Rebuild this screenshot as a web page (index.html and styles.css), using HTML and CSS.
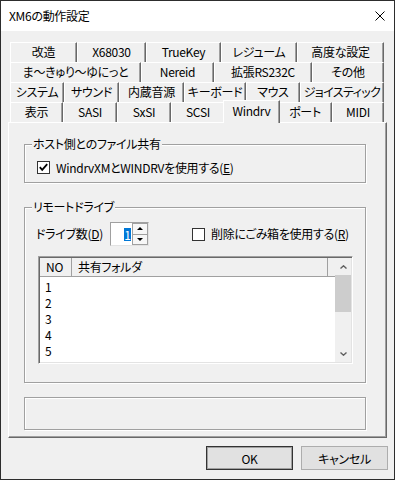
FILE: index.html
```html
<!DOCTYPE html>
<html lang="ja">
<head>
  <meta charset="UTF-8" />
  <title>XM6の動作設定</title>
  <link rel="stylesheet" href="styles.css">
</head>
<body>
  <div class="window">
    <div class="titlebar">
      <span class="title">XM6の動作設定</span>
      <svg class="close" width="10" height="10" viewBox="0 0 10 10">
        <path d="M0.5 0.5 L9.5 9.5 M9.5 0.5 L0.5 9.5" stroke="#000" stroke-width="1" fill="none"/>
      </svg>
    </div>

    <div class="client">
      <!-- tab rows, top to bottom -->
      <div class="tabs">
        <div class="tab-row row1">
          <div class="tab">改造</div>
          <div class="tab">X68030</div>
          <div class="tab">TrueKey</div>
          <div class="tab">レジューム</div>
          <div class="tab">高度な設定</div>
        </div>
        <div class="tab-row row2">
          <div class="tab">ま～きゅり～ゆにっと</div>
          <div class="tab">Nereid</div>
          <div class="tab">拡張RS232C</div>
          <div class="tab">その他</div>
        </div>
        <div class="tab-row row3">
          <div class="tab">システム</div>
          <div class="tab">サウンド</div>
          <div class="tab">内蔵音源</div>
          <div class="tab">キーボード</div>
          <div class="tab">マウス</div>
          <div class="tab">ジョイスティック</div>
        </div>
        <div class="tab-row row4">
          <div class="tab">表示</div>
          <div class="tab">SASI</div>
          <div class="tab">SxSI</div>
          <div class="tab">SCSI</div>
          <div class="tab selected">Windrv</div>
          <div class="tab">ポート</div>
          <div class="tab">MIDI</div>
        </div>
      </div>

      <div class="panel">
        <div class="group group-host">
          <div class="group-label">ホスト側とのファイル共有</div>
          <label class="check">
            <span class="box">
              <svg width="11" height="11" viewBox="0 0 11 11">
                <path d="M1.8 5.2 L4.2 7.8 L9.2 2.2" stroke="#000" stroke-width="1.8" fill="none"/>
              </svg>
            </span>
            <span>WindrvXMとWINDRVを使用する(<u>E</u>)</span>
          </label>
        </div>

        <div class="group group-remote">
          <div class="group-label">リモートドライブ</div>
          <div class="drive-row">
            <span class="drive-label">ドライブ数(<u>D</u>)</span>
            <div class="spin">
              <div class="spin-edit"><span class="sel">1</span></div>
              <div class="spin-buttons">
                <div class="spin-btn"><span class="arrow-up"></span></div>
                <div class="spin-btn"><span class="arrow-down"></span></div>
              </div>
            </div>
            <label class="check check-trash">
              <span class="box"></span>
              <span>削除にごみ箱を使用する(<u>R</u>)</span>
            </label>
          </div>

          <div class="list">
            <div class="list-main">
              <div class="list-header">
                <div class="col col-no">NO</div>
                <div class="col col-folder">共有フォルダ</div>
              </div>
              <div class="list-body">
                <div class="item">1</div>
                <div class="item">2</div>
                <div class="item">3</div>
                <div class="item">4</div>
                <div class="item">5</div>
              </div>
            </div>
            <div class="scrollbar">
              <div class="sb-btn">
                <svg width="7" height="4" viewBox="0 0 7 4"><path d="M0.5 3.5 L3.5 0.8 L6.5 3.5" stroke="#606060" stroke-width="1.4" fill="none"/></svg>
              </div>
              <div class="sb-thumb"></div>
              <div class="sb-track"></div>
              <div class="sb-btn">
                <svg width="7" height="4" viewBox="0 0 7 4"><path d="M0.5 0.5 L3.5 3.2 L6.5 0.5" stroke="#606060" stroke-width="1.4" fill="none"/></svg>
              </div>
            </div>
          </div>
        </div>

        <div class="group group-empty"></div>
      </div>

      <div class="buttons">
        <button class="btn btn-default">OK</button>
        <button class="btn">キャンセル</button>
      </div>
    </div>
  </div>
</body>
</html>
```

FILE: styles.css
```css
* {
  box-sizing: border-box;
}

body {
  margin: 0;
  font-family: "Noto Sans CJK JP", "Noto Sans", sans-serif;
  font-size: 12px;
  font-feature-settings: "palt";
  letter-spacing: -0.3px;
  color: #000;
  background: #f0f0f0;
}

.window {
  width: 395px;
  height: 480px;
  border: 1px solid #2d2d2d;
  background: #f0f0f0;
  overflow: hidden;
}

.titlebar {
  height: 30px;
  background: #fff;
  display: flex;
  align-items: center;
  justify-content: space-between;
  padding: 0 9px 0 8px;
}

.title {
  line-height: 30px;
}

.close {
  display: block;
}

/* tabs */
.tabs {
  margin: 11px 0 0 9px;
}

.tab-row {
  display: grid;
  height: 20px;
}

.row1 { grid-template-columns: 67px 69px 75px 76px 87px; }
.row2 { grid-template-columns: 131px 73px 98px 72px; }
.row3 { grid-template-columns: 54px 55px 65px 62px 54px 84px; }
.row4 { grid-template-columns: 53px 54px 54px 54px 53px 54px 52px; }

.tab {
  height: 20px;
  border-top: 1px solid #fff;
  border-left: 1px solid #fff;
  border-right: 1px solid #696969;
  box-shadow: inset -1px 0 #a0a0a0;
  display: flex;
  justify-content: center;
  line-height: 18px;
  white-space: nowrap;
}

.row3 .tab:last-child {
  letter-spacing: -0.6px;
}

.tab.selected {
  margin: -2px -2px 0;
  height: 23px;
  position: relative;
  z-index: 1;
  background: #f0f0f0;
  line-height: 19px;
}

/* tab page */
.panel {
  margin-left: 7px;
  width: 379px;
  height: 316px;
  border: 1px solid;
  border-color: #fff #696969 #696969 #fff;
  box-shadow: inset -1px -1px #a0a0a0;
  padding-left: 15px;
}

.group {
  width: 342px;
  border: 1px solid #a0a0a0;
  box-shadow: 1px 1px #fff, inset 1px 1px #fff;
}

.group-label {
  width: max-content;
  margin: -9px 0 0 7px;
  padding: 0 1px;
  line-height: 16px;
  background: #f0f0f0;
}

.group-host {
  margin-top: 21px;
  height: 39px;
}

.group-remote {
  margin-top: 24px;
  height: 176px;
}

.group-empty {
  margin-top: 14px;
  height: 33px;
}

.check {
  display: flex;
  align-items: center;
  gap: 6px;
  height: 13px;
  line-height: 16px;
  white-space: nowrap;
}

.group-host .check {
  margin: 9px 0 0 12px;
}

.box {
  width: 13px;
  height: 13px;
  border: 1px solid #333;
  background: #fff;
  display: flex;
  align-items: center;
  justify-content: center;
  flex: none;
}

.drive-row {
  display: flex;
  align-items: center;
  height: 24px;
  margin-top: 7px;
  padding-left: 11px;
}

.drive-label {
  width: 74px;
  line-height: 16px;
  white-space: nowrap;
}

.spin {
  width: 39px;
  height: 24px;
  display: flex;
  border: 1px solid;
  border-color: #a0a0a0 #e3e3e3 #e3e3e3 #a0a0a0;
  background: #fff;
}

.spin-edit {
  flex: 1;
  display: flex;
  align-items: center;
  justify-content: flex-end;
  padding-right: 1px;
}

.sel {
  width: 7px;
  height: 13px;
  line-height: 13px;
  text-align: center;
  letter-spacing: 0;
  background: #0078d7;
  color: #fff;
}

.spin-buttons {
  width: 16px;
  display: flex;
  flex-direction: column;
}

.spin-btn {
  flex: 1;
  display: flex;
  align-items: center;
  justify-content: center;
  border: 1px solid #a0a0a0;
  background: #f7f7f7;
}

.spin-btn + .spin-btn {
  border-top: none;
}

.arrow-up,
.arrow-down {
  width: 0;
  height: 0;
  border-left: 3px solid transparent;
  border-right: 3px solid transparent;
}

.arrow-up {
  border-bottom: 3px solid #000;
}

.arrow-down {
  border-top: 3px solid #000;
}

.check-trash {
  margin-left: 43px;
}

/* list view */
.list {
  margin: 10px 0 0 13px;
  width: 315px;
  height: 108px;
  display: flex;
  border: 1px solid;
  border-color: #a0a0a0 #fff #fff #a0a0a0;
  box-shadow: inset 1px 1px #696969, inset -1px -1px #e3e3e3;
  padding: 1px;
  background: #fff;
}

.list-main {
  flex: 1;
}

.list-header {
  display: flex;
  height: 19px;
  background: #f0f0f0;
  border-bottom: 1px solid #a0a0a0;
}

.col {
  line-height: 18px;
  padding-left: 6px;
  border-right: 1px solid #a0a0a0;
  white-space: nowrap;
}

.col-no {
  width: 32px;
}

.col-folder {
  width: 256px;
}

.list-body {
  padding-top: 2px;
}

.item {
  height: 16px;
  line-height: 16px;
  padding-left: 5px;
}

.scrollbar {
  width: 16px;
  display: flex;
  flex-direction: column;
  background: #f0f0f0;
}

.sb-btn {
  height: 17px;
  display: flex;
  align-items: center;
  justify-content: center;
}

.sb-thumb {
  height: 37px;
  background: #cdcdcd;
}

.sb-track {
  flex: 1;
}

/* dialog buttons */
.buttons {
  display: flex;
  justify-content: flex-end;
  gap: 8px;
  margin-top: 8px;
  padding-right: 6px;
}

.btn {
  width: 87px;
  height: 24px;
  padding: 0;
  font: inherit;
  font-feature-settings: "palt";
  letter-spacing: -0.3px;
  color: #000;
  background: #e1e1e1;
  border: 1px solid #adadad;
}

.btn-default {
  border-color: #333;
  box-shadow: inset 0 0 0 1px #a0a0a0;
}
```
